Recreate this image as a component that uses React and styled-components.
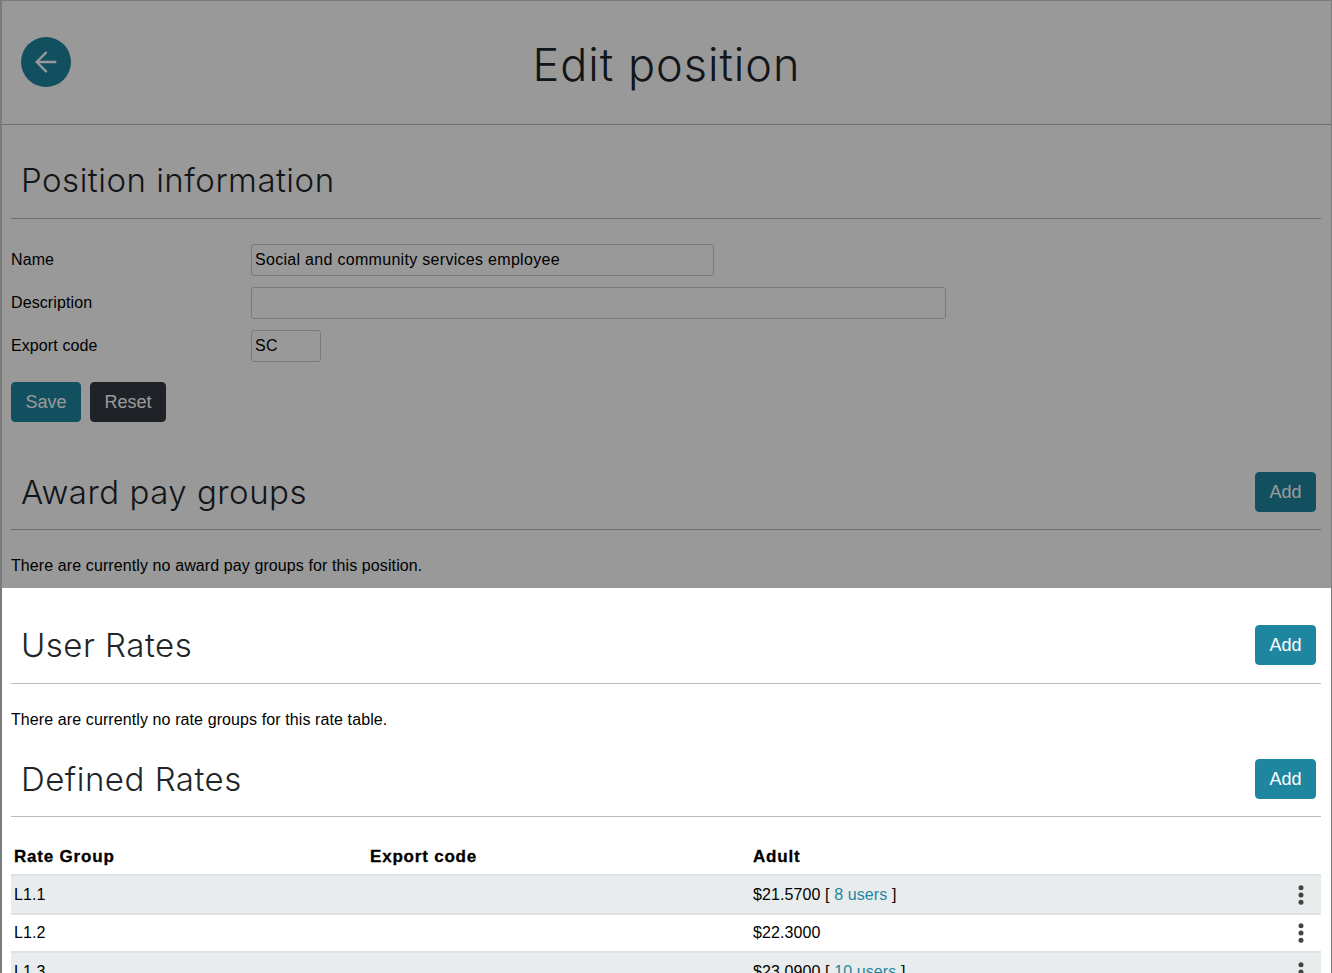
import React from "react";
import styled, { createGlobalStyle } from "styled-components";
import { ArrowLeft } from "lucide-react";

const rates = [
  { id: 1, group: "L1.1", adult: "$21.5700", users: "8 users" },
  { id: 2, group: "L1.2", adult: "$22.3000" },
  { id: 3, group: "L1.3", adult: "$23.0900", users: "10 users" },
];

function KebabIcon() {
  return (
    <svg width="6" height="20" viewBox="0 0 6 20" fill="#444">
      <circle cx="3" cy="2.7" r="2.5" />
      <circle cx="3" cy="10" r="2.5" />
      <circle cx="3" cy="17.3" r="2.5" />
    </svg>
  );
}

function SectionHead({ title, action, top, tail }) {
  return (
    <Head $top={top} $tail={tail}>
      <SectionTitle>{title}</SectionTitle>
      {action && <Button>{action}</Button>}
    </Head>
  );
}

export default function App() {
  return (
    <>
      <GlobalStyle />
      <Page>
        <Dimmed>
          <TopBar>
            <BackButton>
              <ArrowLeft size={32} strokeWidth={1.7} />
            </BackButton>
            <PageTitle>Edit position</PageTitle>
          </TopBar>
          <Body>
            <SectionHead title="Position information" top={35} tail={18} />
            <Form>
              <FormRow>
                <Label>Name</Label>
                <Input $width={463} defaultValue="Social and community services employee" />
              </FormRow>
              <FormRow>
                <Label>Description</Label>
                <Input $width={695} defaultValue="" />
              </FormRow>
              <FormRow>
                <Label>Export code</Label>
                <Input $width={70} defaultValue="SC" />
              </FormRow>
            </Form>
            <Actions>
              <Button>Save</Button>
              <Button $dark>Reset</Button>
            </Actions>
            <SectionHead title="Award pay groups" action="Add" top={50} tail={17} />
            <Note>There are currently no award pay groups for this position.</Note>
          </Body>
          <Overlay />
        </Dimmed>
        <Body>
          <SectionHead title="User Rates" action="Add" top={37} tail={18} />
          <Note>There are currently no rate groups for this rate table.</Note>
          <SectionHead title="Defined Rates" action="Add" top={30} tail={17} />
          <Table>
            <thead>
              <tr>
                <HeadCell $width={350}>Rate Group</HeadCell>
                <HeadCell $width={377}>Export code</HeadCell>
                <HeadCell>Adult</HeadCell>
                <HeadCell $width={34} />
              </tr>
            </thead>
            <tbody>
              {rates.map((rate) => (
                <Row key={rate.id}>
                  <Cell>{rate.group}</Cell>
                  <Cell />
                  <Cell>
                    {rate.adult}
                    {rate.users && (
                      <>
                        {" [ "}
                        <UsersLink>{rate.users}</UsersLink>
                        {" ]"}
                      </>
                    )}
                  </Cell>
                  <MenuCell>
                    <KebabIcon />
                  </MenuCell>
                </Row>
              ))}
            </tbody>
          </Table>
        </Body>
      </Page>
    </>
  );
}

const GlobalStyle = createGlobalStyle`
  html, body {
    margin: 0;
    height: 100%;
    overflow: hidden;
    background: #fff;
  }
  body {
    font-family: "Liberation Sans", Arial, sans-serif;
    font-size: 16px;
    letter-spacing: 0.1px;
    color: #000;
  }
`;

const Page = styled.div`
  box-sizing: border-box;
  height: 973px;
  overflow: hidden;
  border: 1px solid #7b7b7b;
  border-left-width: 2px;
  border-bottom: 0;
`;

const Dimmed = styled.div`
  position: relative;
  height: 587px;
  margin-left: -2px;
  margin-right: -1px;
  padding-left: 2px;
  padding-right: 1px;
`;

const Overlay = styled.div`
  position: absolute;
  inset: -1px 0 0 0;
  background: rgba(0, 0, 0, 0.4);
`;

const TopBar = styled.header`
  display: flex;
  align-items: center;
  height: 121px;
  padding: 0 0 2px 19px;
  border-bottom: 1px solid #bbb;
`;

const BackButton = styled.div`
  display: flex;
  align-items: center;
  justify-content: center;
  width: 50px;
  height: 50px;
  border-radius: 50%;
  background: #1f86a0;
  color: #fff;
`;

const PageTitle = styled.h1`
  flex: 1;
  margin: 0 69px 0 0;
  padding-top: 6px;
  text-align: center;
  font-family: "Inter", "Liberation Sans", sans-serif;
  font-weight: 300;
  font-size: 45px;
  letter-spacing: 1px;
  line-height: 1.2;
  color: #212529;
`;

const Body = styled.div`
  padding: 0 10px 0 9px;
`;

const Head = styled.div`
  display: flex;
  align-items: center;
  justify-content: space-between;
  min-height: 40px;
  margin-top: ${(p) => p.$top}px;
  padding: 0 5px ${(p) => p.$tail}px 10px;
  border-bottom: 1px solid #bbb;
`;

const SectionTitle = styled.h3`
  margin: 0;
  font-family: "Inter", "Liberation Sans", sans-serif;
  font-weight: 300;
  font-size: 33px;
  letter-spacing: 0.5px;
  line-height: 40px;
  color: #212529;
`;

const Form = styled.div`
  display: flex;
  flex-direction: column;
  gap: 11px;
  padding-top: 25px;
`;

const FormRow = styled.div`
  display: flex;
  align-items: center;
`;

const Label = styled.label`
  width: 240px;
`;

const Input = styled.input`
  box-sizing: border-box;
  width: ${(p) => p.$width}px;
  height: 32px;
  padding: 0 3px;
  border: 1px solid #ccc;
  border-radius: 3px;
  background: #fff;
  font: inherit;
  letter-spacing: 0.3px;
  color: #000;
`;

const Actions = styled.div`
  display: flex;
  gap: 9px;
  padding-top: 20px;
`;

const Button = styled.button`
  height: 40px;
  padding: 0 13.5px;
  border: 1px solid ${(p) => (p.$dark ? "#343a40" : "#1f86a0")};
  border-radius: 4px;
  background: ${(p) => (p.$dark ? "#343a40" : "#1f86a0")};
  color: #fff;
  font: inherit;
  font-size: 18px;
  letter-spacing: 0;
`;

const Note = styled.p`
  margin: 0;
  padding-top: 27px;
  line-height: 18px;
`;

const Table = styled.table`
  width: 100%;
  margin-top: 20px;
  border-collapse: collapse;
  table-layout: fixed;
`;

const HeadCell = styled.th`
  ${(p) => p.$width && `width: ${p.$width}px;`}
  padding: 10px 3px 8px 3px;
  text-align: left;
  font-family: "Liberation Sans", Arial, sans-serif;
  font-size: 17px;
  letter-spacing: 0.8px;
  line-height: 19px;
  font-weight: 700;
  -webkit-text-stroke: 0.3px #000;
`;

const Row = styled.tr`
  border-top: 2px solid #dee2e6;
  height: 38.5px;
  &:nth-child(odd) {
    background: #e9ecec;
  }
`;

const Cell = styled.td`
  padding: 1px 3px 0 3px;
`;

const UsersLink = styled.a`
  color: #1f86a0;
`;

const MenuCell = styled.td`
  text-align: center;
  padding: 5px 0 0 0;
`;
